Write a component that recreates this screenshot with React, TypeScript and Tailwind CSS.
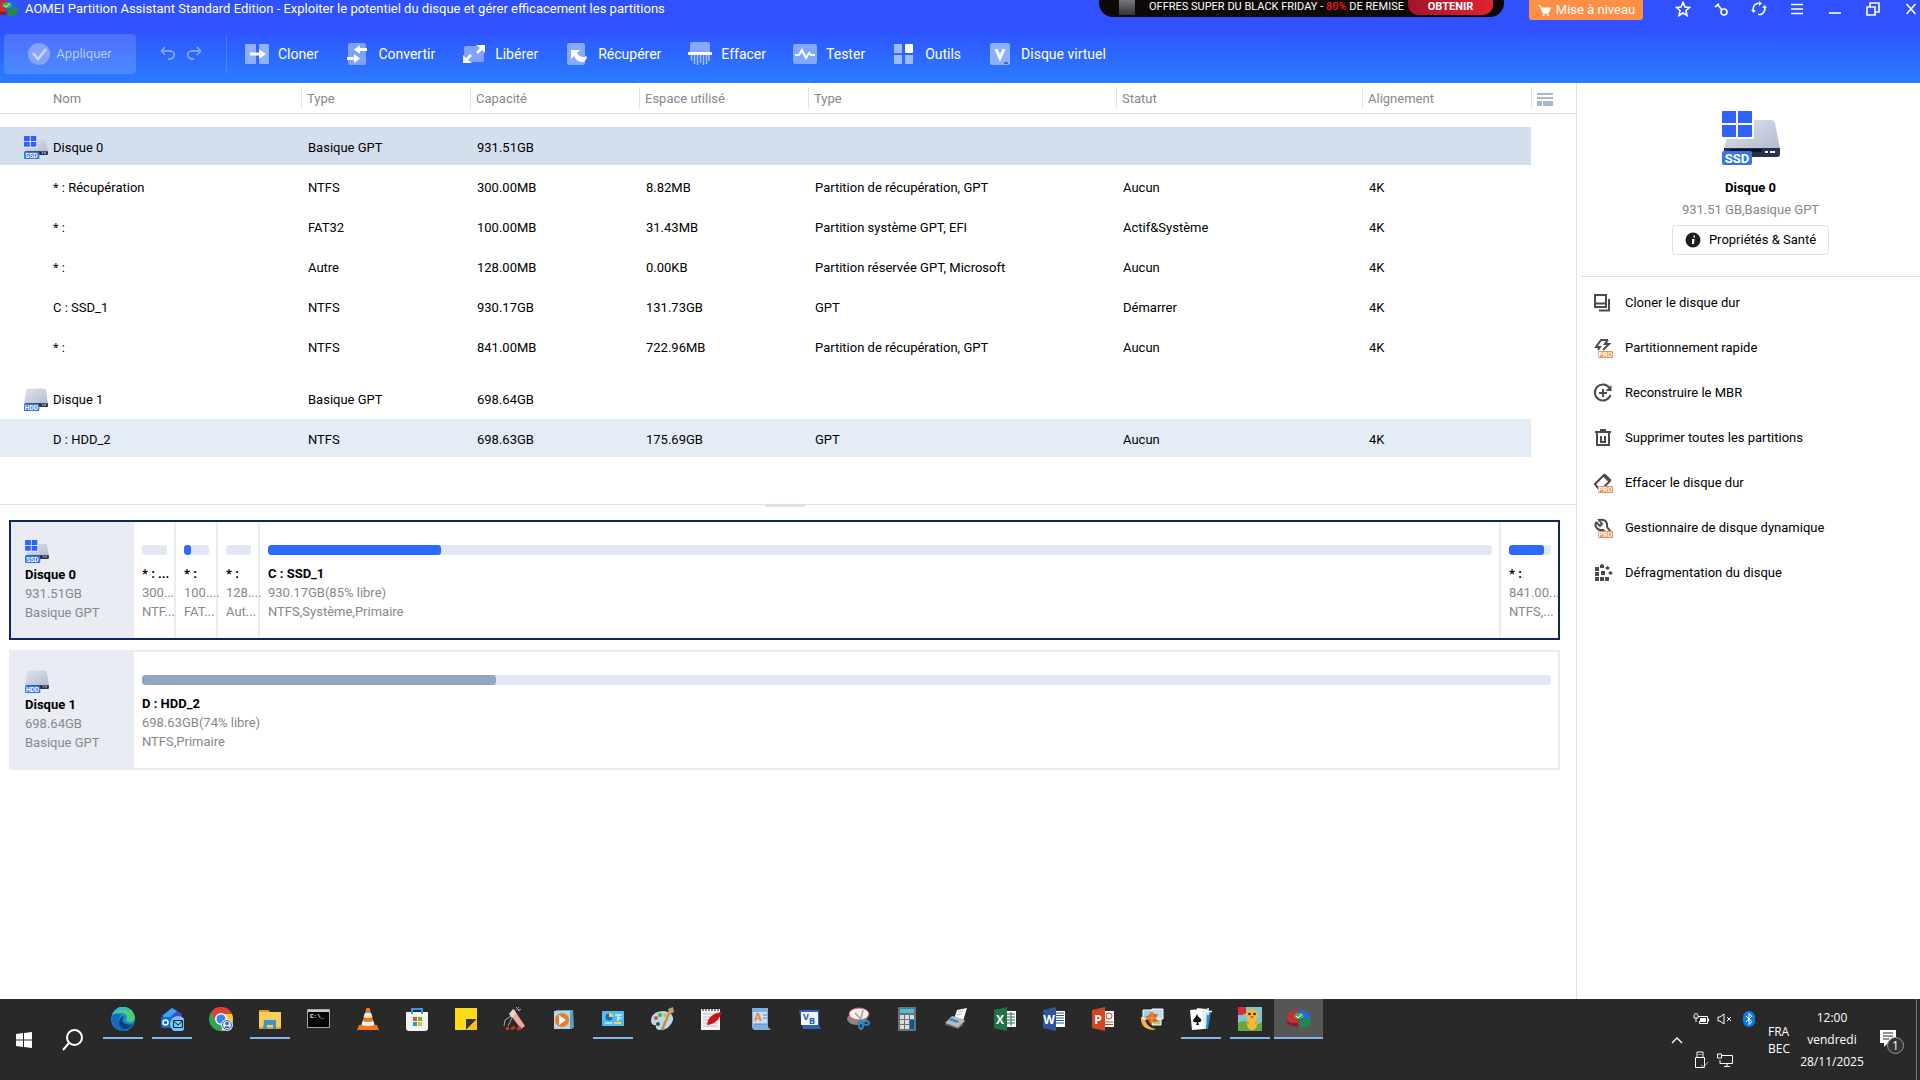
import React from "react";
import { BiSolidCart } from "react-icons/bi";
import { FiBluetooth } from "react-icons/fi";

type Row = {
  name: string;
  fs: string;
  size: string;
  used?: string;
  type?: string;
  status?: string;
  align?: string;
};

type Part = {
  name: string;
  size: string;
  fs: string;
  fill: number;
  cell: string;
};

const disk0Rows: Row[] = [
  { name: "* : Récupération", fs: "NTFS", size: "300.00MB", used: "8.82MB", type: "Partition de récupération, GPT", status: "Aucun", align: "4K" },
  { name: "* :", fs: "FAT32", size: "100.00MB", used: "31.43MB", type: "Partition système GPT, EFI", status: "Actif&Système", align: "4K" },
  { name: "* :", fs: "Autre", size: "128.00MB", used: "0.00KB", type: "Partition réservée GPT, Microsoft", status: "Aucun", align: "4K" },
  { name: "C : SSD_1", fs: "NTFS", size: "930.17GB", used: "131.73GB", type: "GPT", status: "Démarrer", align: "4K" },
  { name: "* :", fs: "NTFS", size: "841.00MB", used: "722.96MB", type: "Partition de récupération, GPT", status: "Aucun", align: "4K" },
];

const disk1Rows: Row[] = [
  { name: "D : HDD_2", fs: "NTFS", size: "698.63GB", used: "175.69GB", type: "GPT", status: "Aucun", align: "4K" },
];

const disk0Parts: Part[] = [
  { name: "* : ...", size: "300...", fs: "NTF...", fill: 0, cell: "w-[42px] border-r-2" },
  { name: "* :", size: "100....", fs: "FAT...", fill: 26, cell: "w-[42px] border-r-2" },
  { name: "* :", size: "128....", fs: "Aut...", fill: 0, cell: "w-[42px] border-r-2" },
  { name: "C : SSD_1", size: "930.17GB(85% libre)", fs: "NTFS,Système,Primaire", fill: 14.1, cell: "flex-1 border-r-2" },
  { name: "* :", size: "841.00...", fs: "NTFS,...", fill: 83, cell: "w-[57px]" },
];

const disk1Parts: Part[] = [
  { name: "D : HDD_2", size: "698.63GB(74% libre)", fs: "NTFS,Primaire", fill: 25.1, cell: "flex-1" },
];

type DiskIconProps = { kind: "SSD" | "HDD"; className: string; large?: boolean };

const DiskIcon = ({ kind, className, large }: DiskIconProps) => (
  <svg viewBox="0 0 58 56" className={className} aria-hidden="true">
    <defs>
      <linearGradient id={"body" + kind} x1="0" y1="0" x2="1" y2="1">
        <stop offset="0" stopColor="#dfe3ee" />
        <stop offset="1" stopColor="#b3bbcf" />
      </linearGradient>
    </defs>
    <path d={kind === "SSD" ? "M9 9h40q3 0 4 3l5 26H2z" : "M9 1h40q3 0 4 3l5 34H0l5-33q1-4 4-4z"} fill={"url(#body" + kind + ")"} />
    <path d="M2 37h56v6q0 3-3 3H5q-3 0-3-3z" fill="#2a3148" />
    <path d="M8 38h32v3H8z" fill="#0e1220" />
    <path d="M43 40h3v2h-3zM48 40h5v2h-5z" fill="#fff" />
    {kind === "SSD" && (
      <>
        <path d="M0 0h32v28H0z" fill="#fff" opacity="0.9" />
        <path d="M1 0h13v12H0V1q0-1 1-1zM16 0h13q1 0 1 1v11H16zM0 14h14v12H1q-1 0-1-1zM16 14h14v11q0 1-1 1H16z" fill="#2e62fb" />
      </>
    )}
    {large ? (
      <>
        <rect y="40" width="30" height="14" rx="2" fill="#3776e6" />
        <text x="15" y="52" textAnchor="middle" fontSize="13" fontWeight="700" fill="#fff" fontFamily="Roboto, sans-serif">{kind}</text>
      </>
    ) : (
      <>
        <rect y="38" width="37" height="18" rx="2" fill="#3776e6" />
        <text x="18" y="53" textAnchor="middle" fontSize="16" fontWeight="700" fill="#fff" fontFamily="Roboto, sans-serif">{kind}</text>
      </>
    )}
  </svg>
);

const AomeiLogo = ({ className }: { className: string }) => (
  <svg viewBox="0 0 24 24" className={className} aria-hidden="true">
    <path d="M0 10Q1 4 11 3l2 7-2 3v6Q1 18 0 13z" fill="#c92e35" />
    <path d="M0 12q1 5 11 4v4Q1 19 0 15z" fill="#8c1d25" />
    <path d="M12 3q11 1 12 8l-6 2-6-3z" fill="#2665ea" />
    <path d="M12 13l12-2v5q-3 5-11 5z" fill="#1f8a4b" />
    <ellipse cx="12" cy="9" rx="5" ry="3" fill="#35b65d" />
    <path d="M9 9l2 2 4-4" stroke="#fff" strokeWidth="1" fill="none" />
  </svg>
);

const tools: { label: string; icon: React.ReactNode }[] = [
  {
    label: "Cloner",
    icon: <><path d="M0 3q0-1 1-1h10v20H1q-1 0-1-1zM14 2h9q1 0 1 1v18q0 1-1 1h-9z" fill="#8fb0ff" /><path d="M5 10.500h9V7l7 5-7 5v-3.500H5z" fill="#fff" /></>,
  },
  {
    label: "Convertir",
    icon: <><rect x="3" y="1" width="18" height="22" rx="2" fill="#7fa2ff" /><path d="M22 6h-7V3l-6 4.500 6 4.500V9h7zM2 15h7v-3l6 4.500L9 21v-3H2z" fill="#fff" /></>,
  },
  {
    label: "Libérer",
    icon: <><rect x="2" y="4" width="20" height="16" rx="2" fill="#7fa2ff" /><path d="M14 3h9v8l-3-3-4 4-2-2 4-4zM1 13l3 3 4-4 2 2-4 4 4 3H1z" fill="#fff" /></>,
  },
  {
    label: "Récupérer",
    icon: <><rect x="2" y="1" width="18" height="22" rx="2" fill="#8aaaff" /><path d="M6 8h9l-3 3q4 6 10 3-1 7-6 6-5-1-7-6l-3 3z" fill="#fff" /></>,
  },
  {
    label: "Effacer",
    icon: <><path d="M2 2q0-2 2-2h16q2 0 2 2v8H2z" fill="#86a8ff" /><path d="M0 10h24v3H0z" fill="#fff" /><path d="M3.500 13v6M6.500 13v9M9.500 13v10M12.500 13v8M15.500 13v10M18.500 13v9M21 13v6" stroke="#a8c4ff" strokeWidth="1.500" /></>,
  },
  {
    label: "Tester",
    icon: <><rect x="0" y="2" width="24" height="20" rx="2" fill="#83a8ff" /><path d="M2 13h4l3-5 4 8 3-5 2 2h4" stroke="#fff" strokeWidth="2" fill="none" /></>,
  },
  {
    label: "Outils",
    icon: <><path d="M3 2h7v9H2V3q0-1 1-1zM2 13h8v9H3q-1 0-1-1zM13 13h8v8q0 1-1 1h-7z" fill="#9bbaff" /><rect x="13" y="2" width="8" height="9" rx="1" fill="#fff" /></>,
  },
  {
    label: "Disque virtuel",
    icon: <><rect x="2" y="1" width="20" height="22" rx="2" fill="#8db0ff" /><path d="M8 7l4 9 4-9" stroke="#fff" strokeWidth="3" fill="none" /><path d="M16 20h4v2h-4z" fill="#3b6ce0" /></>,
  },
];

const pro = (
  <>
    <rect x="5" y="13" width="15" height="7" rx="1" fill="#ee9156" />
    <text x="12.500" y="19" textAnchor="middle" fontSize="7" fontWeight="700" fill="#fff" fontFamily="Roboto, sans-serif">PRO</text>
  </>
);

const actions: { label: string; icon: React.ReactNode }[] = [
  {
    label: "Cloner le disque dur",
    icon: <path d="M2 2h11v12H2zM2 10.500h11M16 6v11.500H6" stroke="#4a4b4f" strokeWidth="2" fill="none" />,
  },
  {
    label: "Partitionnement rapide",
    icon: <><path d="M15 2H8L3 9h4l-2 3M15 2l-3 4h4l-6 6" stroke="#4a4b4f" strokeWidth="2" fill="none" />{pro}</>,
  },
  {
    label: "Reconstruire le MBR",
    icon: <><path d="M16.500 5A8 8 0 1 0 17.500 12" stroke="#4a4b4f" strokeWidth="2" fill="none" /><path d="M18.500 2v6h-6zM9 6h2v3h3v2h-3v3H9v-3H6V9h3z" fill="#4a4b4f" /></>,
  },
  {
    label: "Supprimer toutes les partitions",
    icon: <path d="M2 4h16M7 2h6M4 5v12h12V5M8 8v6h4V8" stroke="#4a4b4f" strokeWidth="2" fill="none" />,
  },
  {
    label: "Effacer le disque dur",
    icon: <><path d="M2 11l9-9 6 6-7 7H5z" stroke="#4a4b4f" strokeWidth="2" fill="none" /><path d="M11 2l6 6" stroke="#4a4b4f" strokeWidth="3.500" />{pro}</>,
  },
  {
    label: "Gestionnaire de disque dynamique",
    icon: <><path d="M3 4l4 4 2-2-3-4q7-1 8 4v3l4 5M3 4q-2 6 4 8h3l3 3" stroke="#4a4b4f" strokeWidth="2" fill="none" />{pro}</>,
  },
  {
    label: "Défragmentation du disque",
    icon: <path d="M2 4h4v4H2zM2 9h4v4H2zM2 14h4v4H2zM7 2l2-1 2 1v3H7zM8 8h4v4H8zM7 14h4v4H7zM12 14h4v4h-4zM12 5l2.500-2L17 5l-2.500 2zM15 10l2.500-2 2.500 2-2.500 2z" fill="#4a4b4f" />,
  },
];

const windowIcons: { label: string; icon: React.ReactNode }[] = [
  { label: "Favoris", icon: <path d="M8 1.500l2 4.500 4.500.5-3.500 3 1 5L8 12l-4 2.500 1-5-3.500-3L6 6z" /> },
  { label: "Licence", icon: <><circle cx="11" cy="11" r="3" /><path d="M9 9L4 3M2 6l4-3" /></> },
  { label: "Actualiser", icon: <><path d="M9 2.500H6Q2 4 2 9M7 13.500h3q4-2 4-7" /><path d="M0 9h5l-2.500 3zM11 7h5l-2.500-3zM8 0l3 2.500L8 5z" fill="#fff" stroke="none" /></> },
  { label: "Menu", icon: <path d="M2 3.500h12M2 8h12M2 12.500h12" /> },
  { label: "Réduire", icon: <path d="M2 12h12" /> },
  { label: "Restaurer", icon: <path d="M2 6h8v8H2zM5 6V2h9v9h-4" /> },
  { label: "Fermer", icon: <path d="M3.500 3l9 10M12.500 3l-9 10" /> },
];

type Task = { label: string; icon: React.ReactNode; open?: boolean; active?: boolean };

const office = (letter: string, color: string, page: React.ReactNode) => (
  <>
    <path d="M12 4h11v16H12z" fill="#fff" />
    {page}
    <path d="M1 3l13-3v24L1 21z" fill={color} />
    <text x="7" y="17" textAnchor="middle" fontSize="12" fontWeight="700" fill="#fff" fontFamily="Open Sans, sans-serif">{letter}</text>
  </>
);

const tasks: Task[] = [
  {
    label: "Edge",
    open: true,
    icon: <><circle cx="12" cy="12" r="12" fill="#1688d8" /><path d="M1 8Q5-1 13 0q10 1 11 11-1 5-7 4-3-1-1-4 0-5-6-5-6 0-9 2z" fill="#48cf77" /><path d="M1 8Q5-1 13 0q4 0 7 4Q10 0 1 8z" fill="#2fb8d8" /><path d="M10 8q-4 4-2 9 3 6 10 6-6 3-12-1Q-1 15 1 9q4-4 9-1z" fill="#1468bd" /><path d="M13 9q-3 4 0 7 4 3 9 1-3 6-9 5-6-3-5-8 1-4 5-5z" fill="#123f78" /></>,
  },
  {
    label: "Outlook",
    open: true,
    icon: <><path d="M3 8l9-7 10 6v9H3z" fill="#4a45d8" /><path d="M2 9l10-8 5 3-9 8z" fill="#34a7ee" /><path d="M1 10h12v11H3q-2 0-2-2z" fill="#1469d2" /><circle cx="5.500" cy="15.500" r="2.500" stroke="#fff" strokeWidth="1.500" fill="none" /><circle cx="18" cy="17" r="8" fill="#6cc8f7" /><path d="M13.500 13.500h9v7h-9zM13.500 14l4.500 4 4.500-4" stroke="#13212e" fill="none" /></>,
  },
  {
    label: "Chrome",
    icon: <><circle cx="12" cy="12" r="12" fill="#30a650" /><path d="M2 5.500A12 12 0 0 1 23 7H12l-5 8z" fill="#df4033" /><path d="M23 7a12 12 0 0 1-11 17l6-11-3-6z" fill="#fbc92f" /><circle cx="12" cy="12" r="6" fill="#fff" /><circle cx="12" cy="12" r="4.500" fill="#3e83ee" /><circle cx="18" cy="18" r="6" fill="#e2e9f8" /><circle cx="18" cy="18" r="4.500" stroke="#2f67bd" fill="none" /><circle cx="18" cy="16.500" r="1.800" fill="#2f67bd" /><path d="M15 21q3-4 6 0z" fill="#2f67bd" /></>,
  },
  {
    label: "Explorateur de fichiers",
    open: true,
    icon: <><path d="M1 3h9l2 2h11v16H1z" fill="#f6ce59" /><path d="M1 3h9l2 2H1z" fill="#d99b18" /><path d="M1 20h22v2H1z" fill="#e3a42b" /><path d="M6 14q0-1 1-1h10q1 0 1 1v8h-3v-4H9v4H5z" fill="#3d94cf" /></>,
  },
  {
    label: "Invite de commandes",
    icon: <><path d="M.5 2.500h22v18H.5z" fill="#050505" stroke="#a8a8a8" /><path d="M1 3h21v2H1z" fill="#c8c8c8" /><text x="3" y="11" fontSize="6" fontWeight="700" fill="#fff" fontFamily="Liberation Mono, monospace">C:\_</text></>,
  },
  {
    label: "VLC",
    icon: <><path d="M10.500 1h3l6 20h-15z" fill="#ee7b19" /><path d="M9 6h6l1.500 4q-4.500 2-9 0zM6.500 14q5.500 2 11 0l1 4q-6 2-13 0z" fill="#eee" /><path d="M3 18h2q7 4 14 0h2l2 5H1z" fill="#ee7b19" /></>,
  },
  {
    label: "Microsoft Store",
    icon: <><path d="M1 5h22v16q0 3-3 3H4q-3 0-3-3z" fill="#f3f3f3" /><path d="M7 7V2h10v5" stroke="#2ba2d4" strokeWidth="2" fill="none" /><path d="M8 10h4v4H8z" fill="#e45429" /><path d="M13 10h4v4h-4z" fill="#79b42b" /><path d="M8 15h4v4H8z" fill="#2b9cd8" /><path d="M13 15h4v4h-4z" fill="#f3b81f" /></>,
  },
  {
    label: "Pense-bête",
    icon: <><path d="M1 1h22v22H1z" fill="#fbdc17" /><path d="M12 23V12h11z" fill="#343434" /><path d="M12 23l11-11v11z" fill="#f5c21b" /></>,
  },
  {
    label: "Nettoyage",
    icon: <><path d="M7 6l4-4 3 5 8 12-4 3-9-12z" fill="#e9aaa0" /><path d="M6 7l4-5 3 4-4 5z" fill="#f2d3cc" /><path d="M8 9l-6 4-1 6M9 11l-4 8M13 3l3-3M15 4l3-2M13 0l4 4" stroke="#a9a3a3" fill="none" /><path d="M3 22l3-1M8 22l4-2M14 22l4-1" stroke="#c5372f" strokeWidth="3" fill="none" /></>,
  },
  {
    label: "Lecteur Windows Media",
    icon: <><path d="M4 3h17l1 17-2 2H5z" fill="#5aa1bd" /><path d="M2 4h16v18H2z" fill="#b1d8e6" /><circle cx="10" cy="13" r="7" fill="#ee7c26" /><path d="M7 8l7 5-7 5z" fill="#fff" /></>,
  },
  {
    label: "Panneau de configuration",
    open: true,
    icon: <><rect x="1" y="4" width="22" height="15" rx="1" fill="#54bdf0" /><circle cx="8" cy="10" r="3.500" fill="#1668b5" /><path d="M8 10V6a4 4 0 0 1 4 4z" fill="#ffd449" /><path d="M14 8h3v6M17 8h4M17 11h4M4 16h7" stroke="#fff" fill="none" /><path d="M13 16h7" stroke="#ffd449" strokeWidth="2" /></>,
  },
  {
    label: "Paint",
    icon: <><path d="M1 13Q2 4 14 4q10 2 9 9-3 10-14 10-4-1-3-5-5 1-5-5z" fill="#b7dbea" /><circle cx="6" cy="11" r="2" fill="#df4d3c" /><circle cx="10" cy="8" r="2" fill="#50af4f" /><circle cx="15" cy="8" r="2" fill="#f0b42e" /><circle cx="8" cy="17" r="2" fill="#36556c" /><path d="M20 4l-8 19" stroke="#cf8b3d" strokeWidth="2.500" /><path d="M18 2l5-2 1 5-5 3z" fill="#c69b6e" /></>,
  },
  {
    label: "Bloc-notes",
    icon: <><path d="M2 2h19v21H2z" fill="#f3f3f3" /><path d="M4 7h15M4 10h15M4 13h15M4 16h15M4 19h15" stroke="#bfbfbf" /><path d="M4 1v3M7 1v3M10 1v3M13 1v3M16 1v3M19 1v3" stroke="#111" /><path d="M23 5Q9 7 8 18q11-1 15-13z" fill="#ca1517" /></>,
  },
  {
    label: "WordPad",
    icon: <><path d="M4 1h16v19l3 3H6l-2-2z" fill="#7eafe0" /><path d="M5 5h14v12H5z" fill="#c9dff4" /><text x="10" y="14" textAnchor="middle" fontSize="11" fontWeight="700" fill="#ec8a2d" fontFamily="Open Sans, sans-serif">A</text><path d="M15 8h4M15 11h4M6 17h13" stroke="#5989bd" /></>,
  },
  {
    label: "Visual Basic",
    icon: <><path d="M2 3h20v15l2 4H6z" fill="#2f62bd" /><path d="M4 5h17v13H4z" fill="#f1f5fb" /><text x="9" y="13" textAnchor="middle" fontSize="9" fontWeight="700" fill="#2459b5" fontFamily="Open Sans, sans-serif">V</text><text x="15" y="17" textAnchor="middle" fontSize="9" fontWeight="700" fill="#2459b5" fontFamily="Open Sans, sans-serif">B</text></>,
  },
  {
    label: "Outil Capture",
    icon: <><ellipse cx="11" cy="12" rx="10" ry="6" fill="#8d8585" /><ellipse cx="13" cy="7" rx="10" ry="6" fill="#f4f0f0" stroke="#d65858" /><path d="M9 6l9 9M17 3l-3 12" stroke="#9aa3ab" strokeWidth="1.500" /><ellipse cx="15" cy="18" rx="2" ry="4" stroke="#2489c3" strokeWidth="2" fill="none" /><ellipse cx="20" cy="16" rx="3" ry="2" stroke="#2489c3" strokeWidth="2" fill="none" /></>,
  },
  {
    label: "Calculatrice",
    icon: <><rect x="3" y="0" width="18" height="24" rx="1" fill="#6b7377" /><path d="M5 2h14v4H5z" fill="#45c0dc" /><path d="M5 8h4v4H5zM10 8h4v4h-4zM15 8h4v4h-4zM5 13h4v4H5zM10 13h4v4h-4zM5 18h4v4H5zM10 18h4v4h-4z" fill="#d9dcde" /><path d="M15 13h4v9h-4z" fill="#14509b" /></>,
  },
  {
    label: "Télécopie et numérisation",
    icon: <><path d="M13 3l10-2-4 13-9-2z" fill="#fafafa" /><path d="M1 16l7-7 11 3 2 2-7 7z" fill="#b3b9be" /><path d="M1 16l13 5 5-5v2l-5 4L1 18z" fill="#5d646b" /><path d="M5 13l8 3 2-2-8-3z" fill="#4286bd" /><path d="M14 5l5-1M13 8l5-1" stroke="#b9bdc1" /></>,
  },
  { label: "Excel", icon: office("X", "#1f7244", <path d="M14 7h8M14 10h8M14 13h8M14 16h8M18 5v14" stroke="#1f7244" />) },
  { label: "Word", icon: office("W", "#2b579a", <path d="M14 6h8M14 8.500h8M14 11h8M14 13.500h8M14 16h8" stroke="#2b579a" />) },
  { label: "PowerPoint", icon: office("P", "#d24625", <><circle cx="18" cy="9" r="3" stroke="#d24625" fill="none" /><path d="M14 15h8M14 17.500h8" stroke="#d24625" /></>) },
  {
    label: "Galerie",
    icon: <><path d="M1 10q-1 12 12 13l3-1Q5 20 5 10z" fill="#efb34d" /><path d="M3 3h12v9H3z" fill="#9fd0ea" stroke="#fff" /><path d="M12 2h11v10H12z" fill="#b8dcec" stroke="#fff" /><path d="M12 12h9v6h-9z" fill="#a6cf8c" stroke="#fff" /><path d="M12 4l2 3 4 0-2 4 2 4-5 0-3 2-2-4-3-3 4-2z" fill="#df6423" /><path d="M12 6v10M7 11h9" stroke="#f9aa45" /></>,
  },
  {
    label: "Solitaire",
    open: true,
    icon: <><path d="M14 3l8 1-3 18-8-1z" fill="#2492d3" /><path d="M8 1l10 1-1 20-10-1z" fill="#e2eef5" /><path d="M1 3l12-1 2 20-12 1z" fill="#fff" /><path d="M8 7q1 3 4 5 1 4-3 3l1 3H7l1-3q-4 1-4-2 3-3 4-6z" fill="#141414" /><path d="M19 1v7M16 4.500h7" stroke="#fff" strokeWidth="1.500" /></>,
  },
  {
    label: "Jeu",
    open: true,
    icon: <><path d="M0 0h24v24H0z" fill="#7fc5d8" /><path d="M0 16q6-4 12 0t12-1v9H0z" fill="#6ba543" /><circle cx="14" cy="8" r="6" fill="#f5bc31" /><ellipse cx="14" cy="17" rx="5" ry="6" fill="#f5bc31" /><path d="M7 14l4 1v3zM21 14l-4 1v3z" fill="#e39b1f" /><path d="M0 0h8v6l-4 2H0z" fill="#dc2a37" /><circle cx="11.500" cy="7" r="1.300" fill="#222" /><circle cx="16.500" cy="7" r="1.300" fill="#222" /><path d="M12 9h4l-2 3z" fill="#d95e22" /></>,
  },
  { label: "AOMEI Partition Assistant", open: true, active: true, icon: <AomeiLogo className="size-6" /> },
];

const cell = "h-[40px] border-b-2 border-white p-0 pt-[3px] pl-[7px]";

const HeadCell = ({ children }: { children: React.ReactNode }) => (
  <th className="border-b border-[#d5dde6] p-0 text-left font-normal">
    <div className="flex h-[22px] items-center border-l border-[#dfe3ea] pt-[2px] pl-[5px]">{children}</div>
  </th>
);

const Columns = ({ menu }: { menu?: boolean }) => (
  <colgroup>
    <col />
    <col className="w-[169px]" />
    <col className="w-[169px]" />
    <col className="w-[169px]" />
    <col className="w-[308px]" />
    <col className="w-[246px]" />
    <col className="w-[169px]" />
    {menu && <col className="w-[45px]" />}
  </colgroup>
);

const DiskRow = ({ row, kind, bg }: { row: Row; kind?: "SSD" | "HDD"; bg?: string }) => (
  <tr className={bg}>
    <td className="h-[40px] border-b-2 border-white p-0 pt-[3px] pl-6">
      <div className="flex items-center gap-[5px]">
        {kind ? <DiskIcon kind={kind} className="w-6 shrink-0" /> : <span className="w-6" />}
        {row.name}
      </div>
    </td>
    <td className={cell}>{row.fs}</td>
    <td className={cell}>{row.size}</td>
    <td className={cell}>{row.used}</td>
    <td className={cell}>{row.type}</td>
    <td className={cell}>{row.status}</td>
    <td className={cell}>{row.align}</td>
  </tr>
);

const DiskMap = ({ name, size, kind, parts, selected }: { name: string; size: string; kind: "SSD" | "HDD"; parts: Part[]; selected?: boolean }) => (
  <section className={"flex h-[120px] border-2 " + (selected ? "border-[#14255c]" : "border-[#e9ecf3]")}>
    <div className="flex w-[123px] shrink-0 flex-col bg-[#e9ecf3] pl-[14px] pt-[18px]">
      <DiskIcon kind={kind} className="h-[23px] w-6" />
      <h3 className="mt-[2px] text-[13px] leading-[19px] font-bold">{name}</h3>
      <p className="text-[13px] leading-[19px] text-[#85888e]">{size}</p>
      <p className="text-[13px] leading-[19px] text-[#85888e]">Basique GPT</p>
    </div>
    {parts.map((part, i) => (
      <div key={i} className={"min-w-0 shrink-0 border-[#e9ecf3] pl-2 pt-[23px] whitespace-nowrap " + part.cell}>
        <div className="mr-[7px] h-[10px] overflow-hidden rounded-[3px] bg-[#e1e8f3]">
          <div className={"h-full rounded-[3px] " + (selected ? "bg-[#2c69fd]" : "bg-[#90a5c4]")} style={{ width: part.fill + "%" }} />
        </div>
        <h4 className="mt-[9px] text-[13px] leading-[19px] font-bold">{part.name}</h4>
        <p className="text-[13px] leading-[19px] text-[#85888e]">{part.size}</p>
        <p className="text-[13px] leading-[19px] text-[#85888e]">{part.fs}</p>
      </div>
    ))}
  </section>
);

const Header = () => (
  <header className="h-[83px] shrink-0 bg-linear-to-b from-[#2f51ff] from-35% to-[#2c7cff] text-white">
    <div className="-mr-[10px] flex h-[34px] items-start">
      <AomeiLogo className="mt-[-3px] -ml-1 size-[22px] shrink-0" />
      <h1 className="ml-[7px] flex-1 text-[13px] leading-[18px] whitespace-nowrap">
        AOMEI Partition Assistant Standard Edition - Exploiter le potentiel du disque et gérer efficacement les partitions
      </h1>
      <a href="#" className="flex h-[17px] w-[405px] shrink-0 items-start rounded-b-[14px] bg-[#0d0908] pl-5 text-[11px] leading-[14px]">
        <span className="h-[15px] w-4 shrink-0 bg-linear-to-b from-[#77787b] to-[#34363a]" />
        <span className="ml-[14px] flex-1 whitespace-nowrap">
          OFFRES SUPER DU BLACK FRIDAY - <b className="font-medium text-[#f3141c]">80%</b> DE REMISE
        </span>
        <span className="mr-[11px] h-[15px] w-[85px] shrink-0 rounded-b-[10px] bg-linear-to-r from-[#a51228] to-[#df2334] text-center leading-[13px] font-bold">OBTENIR</span>
      </a>
      <button className="ml-[25px] flex h-5 w-[114px] shrink-0 items-center justify-center gap-1 rounded-b-[3px] bg-[#ff8f47] text-[13px]">
        <BiSolidCart className="size-[15px]" />
        Mise à niveau
      </button>
      <div className="ml-[21px] flex shrink-0">
        {windowIcons.map((item) => (
          <button key={item.label} aria-label={item.label} className="flex h-[18px] w-[38px] items-center justify-center">
            <svg viewBox="0 0 16 16" className="size-4" fill="none" stroke="#fff" strokeWidth="1.600">{item.icon}</svg>
          </button>
        ))}
      </div>
    </div>
    <nav className="flex h-[40px] items-center pl-1 text-[14px]">
      <button className="flex h-[40px] w-[132px] items-center justify-center gap-[6px] rounded bg-white/15 text-white/60">
        <svg viewBox="0 0 22 22" className="size-[22px]">
          <circle cx="11" cy="11" r="11" fill="#86a3fb" />
          <path d="M5 10l5 6 8-10" stroke="#c9d6ff" strokeWidth="2.500" fill="none" />
        </svg>
        <span className="text-[13px]">Appliquer</span>
      </button>
      <button aria-label="Annuler" className="ml-6">
        <svg viewBox="0 0 16 16" className="size-4" fill="none" stroke="#82a4ff" strokeWidth="1.800">
          <path d="M2 5h9q4 1 3 5-1 3-4 3H8M5 1L1.500 5 5 9" />
        </svg>
      </button>
      <button aria-label="Rétablir" className="ml-[10px]">
        <svg viewBox="0 0 16 16" className="size-4" fill="none" stroke="#82a4ff" strokeWidth="1.800">
          <path d="M14 5H5Q1 6 2 10q1 3 4 3h2M11 1l3.500 4L11 9" />
        </svg>
      </button>
      <div className="ml-6 h-[38px] border-l border-white/15" />
      <div className="ml-[18px] flex gap-[27px]">
        {tools.map((tool) => (
          <button key={tool.label} className="flex items-center gap-[9px] whitespace-nowrap">
            <svg viewBox="0 0 24 24" className="size-6 shrink-0" aria-hidden="true">{tool.icon}</svg>
            {tool.label}
          </button>
        ))}
      </div>
    </nav>
  </header>
);

const Sidebar = () => (
  <aside className="w-[344px] shrink-0 border-l border-[#dfe1e6] pl-1">
    <div className="flex h-[194px] flex-col items-center border-b border-[#dfe1e6] pt-7">
      <DiskIcon kind="SSD" className="h-[56px] w-[58px]" large />
      <h2 className="mt-[11px] text-[13px] leading-[19px] font-bold">Disque 0</h2>
      <p className="mt-[3px] text-[13px] leading-[19px] text-[#85888e]">931.51 GB,Basique GPT</p>
      <button className="mt-[6px] flex h-[30px] w-[157px] items-center justify-center gap-2 rounded border border-[#dfe1e6] text-[13px]">
        <svg viewBox="0 0 16 16" className="size-4">
          <circle cx="8" cy="8" r="7.500" fill="#1e1f22" />
          <path d="M8.500 3.500h1.500v2H8.500zM7 7h2.500L9 12H7z" fill="#fff" />
        </svg>
        Propriétés &amp; Santé
      </button>
    </div>
    <ul className="pt-[3px]">
      {actions.map((action) => (
        <li key={action.label}>
          <button className="flex h-[45px] w-full items-center gap-3 pl-3 text-[13px]">
            <svg viewBox="0 0 20 20" className="size-5" aria-hidden="true">{action.icon}</svg>
            {action.label}
          </button>
        </li>
      ))}
    </ul>
  </aside>
);

const Taskbar = () => (
  <footer className="flex h-[81px] shrink-0 bg-[#29292a] font-['Open_Sans',sans-serif] text-[12px] text-white">
    <button aria-label="Démarrer" className="flex w-12 items-center justify-center">
      <svg viewBox="0 0 16 16" className="size-4" fill="#fff">
        <path d="M0 2l7-1v6.500H0zM8 1l8-1v7.500H8zM0 8.500h7V15l-7-1zM8 8.500h8V16l-8-1z" />
      </svg>
    </button>
    <button aria-label="Rechercher" className="flex w-[50px] items-center justify-center">
      <svg viewBox="0 0 22 22" className="size-[22px]" fill="none" stroke="#fff" strokeWidth="2">
        <circle cx="12.500" cy="8.500" r="7.500" />
        <path d="M7 14l-6 7" />
      </svg>
    </button>
    <div className="flex flex-1">
      {tasks.map((task) => (
        <button
          key={task.label}
          aria-label={task.label}
          className={"flex h-10 w-[49px] flex-col items-center pt-2 " + (task.active ? "bg-[#565657]" : "")}
        >
          <svg viewBox="0 0 24 24" className="size-6" aria-hidden="true">{task.icon}</svg>
          {task.open && <span className={"mt-[6px] h-[2px] bg-[#83b6ea] " + (task.active ? "w-full" : "w-10")} />}
        </button>
      ))}
    </div>
    <button aria-label="Icônes cachées" className="flex w-6 items-center justify-center">
      <svg viewBox="0 0 12 8" className="w-3" fill="none" stroke="#fff" strokeWidth="1.300"><path d="M1 7l5-5 5 5" /></svg>
    </button>
    <div className="grid w-[72px] grid-cols-3 grid-rows-2 place-items-center">
      <svg viewBox="0 0 16 12" className="w-4" fill="none" stroke="#fff">
        <path d="M5 3.500h9.500v7h-8V8M1 2v3h4V2M2 0v2M4 0v2M3 5v4" />
        <path d="M7 5h6v4H7zM14.500 5.500H16v3h-1.500z" fill="#fff" stroke="none" />
      </svg>
      <svg viewBox="0 0 16 12" className="w-4" fill="none" stroke="#fff"><path d="M1 4h2l4-3v10L3 8H1zM10 4l4 4M14 4l-4 4" /></svg>
      <span className="flex h-4 w-3 items-center justify-center rounded-full bg-[#0b7be4]"><FiBluetooth className="size-3" /></span>
      <svg viewBox="0 0 16 18" className="w-4" fill="none" stroke="#fff"><path d="M4 6V1h6v5M2.500 6.500h9v10h-9zM6 3v1M8 3v1" /><path d="M8 14l3 2 4-5" stroke="#aaa" /></svg>
      <svg viewBox="0 0 16 14" className="w-4" fill="none" stroke="#fff"><path d="M5 2.500h10.500v8H3V7M.5 1v4h4V1zM7 13.500h6M10 11v2" /></svg>
    </div>
    <div className="ml-[7px] flex w-[21px] flex-col justify-center leading-[17px]">
      <span>FRA</span>
      <span>BEC</span>
    </div>
    <div className="flex w-[86px] flex-col items-center justify-center leading-[22px]">
      <span>12:00</span>
      <span>vendredi</span>
      <span>28/11/2025</span>
    </div>
    <button aria-label="Notifications" className="ml-1 flex w-[26px] items-center justify-center pt-1">
      <svg viewBox="0 0 24 24" className="size-6">
        <path d="M0 0h16v13h-8l-4 4v-4H0z" fill="#fff" />
        <path d="M3 3h10M3 6h10M3 9h6" stroke="#29292a" />
        <circle cx="15.500" cy="15.500" r="8" fill="#353536" stroke="#9b9b9b" />
        <text x="15.500" y="20" textAnchor="middle" fontSize="12" fill="#fff">1</text>
      </svg>
    </button>
    <div className="ml-[11px] w-1 border-l border-[#777]" />
  </footer>
);

export default function App() {
  return (
    <div className="flex h-screen flex-col overflow-hidden bg-white font-[Roboto,sans-serif] text-black">
      <Header />
      <div className="flex min-h-0 flex-1">
        <main className="min-w-0 flex-1">
          <div className="h-[422px] border-b border-[#dcdfe4]">
            <table className="w-full table-fixed border-separate border-spacing-0 text-[13px] whitespace-nowrap">
              <Columns menu />
              <thead className="text-[#85888e]">
                <tr className="h-[31px]">
                  <th className="border-b border-[#d5dde6] p-0 pt-[2px] pl-[53px] text-left font-normal">Nom</th>
                  <HeadCell>Type</HeadCell>
                  <HeadCell>Capacité</HeadCell>
                  <HeadCell>Espace utilisé</HeadCell>
                  <HeadCell>Type</HeadCell>
                  <HeadCell>Statut</HeadCell>
                  <HeadCell>Alignement</HeadCell>
                  <HeadCell>
                    <button aria-label="Colonnes">
                      <svg viewBox="0 0 16 13" className="w-4" fill="#a9b8c8"><path d="M0 0h16v2H0zM0 4h16v2H0zM0 8h5v5H0zM6 8h10v5H6z" /></svg>
                    </button>
                  </HeadCell>
                </tr>
              </thead>
            </table>
            <div className="pt-[13px] pr-[45px]">
              <table className="w-full table-fixed border-separate border-spacing-0 text-[13px] whitespace-nowrap">
                <Columns />
                <tbody>
                  <DiskRow kind="SSD" bg="bg-[#d4dfee]" row={{ name: "Disque 0", fs: "Basique GPT", size: "931.51GB" }} />
                  {disk0Rows.map((row, i) => (
                    <DiskRow key={i} row={row} />
                  ))}
                </tbody>
                <tbody>
                  <tr aria-hidden="true">
                    <td colSpan={7} className="h-3 p-0" />
                  </tr>
                  <DiskRow kind="HDD" row={{ name: "Disque 1", fs: "Basique GPT", size: "698.64GB" }} />
                  {disk1Rows.map((row, i) => (
                    <DiskRow key={i} row={row} bg="bg-[#e4edf6]" />
                  ))}
                </tbody>
              </table>
            </div>
          </div>
          <div className="pr-[7px]">
            <div className="mx-auto h-[2px] w-10 bg-[#dbe2f0]" />
          </div>
          <div className="flex flex-col gap-[10px] pt-[13px] pr-4 pl-[9px]">
            <DiskMap name="Disque 0" size="931.51GB" kind="SSD" parts={disk0Parts} selected />
            <DiskMap name="Disque 1" size="698.64GB" kind="HDD" parts={disk1Parts} />
          </div>
        </main>
        <Sidebar />
      </div>
      <Taskbar />
    </div>
  );
}
